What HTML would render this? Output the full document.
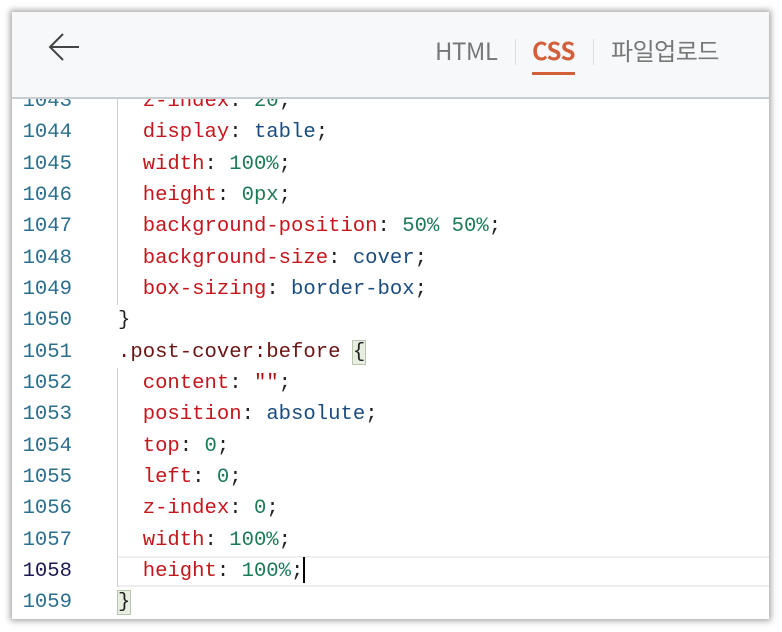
<!DOCTYPE html>
<html><head><meta charset="utf-8"><style>
body{margin:0;width:782px;height:632px;background:#fff;position:relative;overflow:hidden;font-family:"Liberation Sans","Noto Sans CJK KR",sans-serif}
.frame{position:absolute;left:12px;top:12px;width:757px;height:607px;background:#fff;box-shadow:0 0 6px 2px rgba(0,0,0,.35);overflow:hidden}
.hdr{position:absolute;left:0;top:0;width:757px;height:85px;background:#f7f8fa;border-bottom:2px solid #c9ccd0;z-index:2}
.tab{position:absolute;top:22px;font-family:"Noto Sans CJK KR",sans-serif;font-size:24px;color:#777;line-height:32px;letter-spacing:-0.5px}
.sep{position:absolute;top:27px;width:1px;height:26px;background:#ddd}
.code{position:absolute;left:0;top:74px;font-family:"Liberation Mono",monospace;font-size:20.6px}
.ln{position:relative;height:31.33px;line-height:31.33px;white-space:pre}
.n{position:absolute;left:0;width:60px;text-align:right;color:#2b6e8c}
.t{position:absolute;left:106px;color:#222}
.g{position:absolute;left:105px;top:0;width:1px;height:31.33px;background:#cfcfcf}
.p{color:#c4161c}.v{color:#1d7a56}.k{color:#1a4c80}.s{color:#6b1414}.st{color:#a11}
.br{background:#e6efe0;outline:1px solid #b8c4b0}
.cur{border-top:2px solid #eee;border-bottom:2px solid #eee;box-sizing:border-box}
</style></head><body>
<div class="frame">
<div class="hdr">
<svg style="position:absolute;left:34px;top:18px" width="36" height="36" viewBox="0 0 36 36"><path d="M33 17H5M17 4L4 17L17 30" fill="none" stroke="#444" stroke-width="2"/></svg>
<div class="tab" style="left:423px">HTML</div>
<div class="sep" style="left:503px"></div>
<div class="tab" style="left:520px;color:#d2603a;font-weight:bold">CSS</div>
<div style="position:absolute;left:520px;top:60px;width:43px;height:3px;background:#d2603a"></div>
<div class="sep" style="left:581px"></div>
<div class="tab" style="left:599px">파일업로드</div>
</div>
<div class="code">
<div class="ln"><span class="n">1043</span><span class="g"></span><span class="t">  <span class="p">z-index</span>: <span class="v">20</span>;</span></div>
<div class="ln"><span class="n">1044</span><span class="g"></span><span class="t">  <span class="p">display</span>: <span class="k">table</span>;</span></div>
<div class="ln"><span class="n">1045</span><span class="g"></span><span class="t">  <span class="p">width</span>: <span class="v">100%</span>;</span></div>
<div class="ln"><span class="n">1046</span><span class="g"></span><span class="t">  <span class="p">height</span>: <span class="v">0px</span>;</span></div>
<div class="ln"><span class="n">1047</span><span class="g"></span><span class="t">  <span class="p">background-position</span>: <span class="v">50% 50%</span>;</span></div>
<div class="ln"><span class="n">1048</span><span class="g"></span><span class="t">  <span class="p">background-size</span>: <span class="k">cover</span>;</span></div>
<div class="ln"><span class="n">1049</span><span class="g"></span><span class="t">  <span class="p">box-sizing</span>: <span class="k">border-box</span>;</span></div>
<div class="ln"><span class="n">1050</span><span class="t">}</span></div>
<div class="ln"><span class="n">1051</span><span class="t"><span class="s">.post-cover:before</span> <span class="br">{</span></span></div>
<div class="ln"><span class="n">1052</span><span class="g"></span><span class="t">  <span class="p">content</span>: <span class="st">""</span>;</span></div>
<div class="ln"><span class="n">1053</span><span class="g"></span><span class="t">  <span class="p">position</span>: <span class="k">absolute</span>;</span></div>
<div class="ln"><span class="n">1054</span><span class="g"></span><span class="t">  <span class="p">top</span>: <span class="v">0</span>;</span></div>
<div class="ln"><span class="n">1055</span><span class="g"></span><span class="t">  <span class="p">left</span>: <span class="v">0</span>;</span></div>
<div class="ln"><span class="n">1056</span><span class="g"></span><span class="t">  <span class="p">z-index</span>: <span class="v">0</span>;</span></div>
<div class="ln"><span class="n">1057</span><span class="g"></span><span class="t">  <span class="p">width</span>: <span class="v">100%</span>;</span></div>
<div class="ln"><div class="cur" style="position:absolute;left:106px;top:0;width:660px;height:31.33px"></div><span class="n" style="color:#1a1a50">1058</span><span class="g"></span><span class="t">  <span class="p">height</span>: <span class="v">100%</span>;<span style="display:inline-block;width:2px;height:26px;background:#000;vertical-align:middle"></span></span></div>
<div class="ln"><span class="n">1059</span><span class="t"><span class="br">}</span></span></div>
</div>
</div>
</body></html>
